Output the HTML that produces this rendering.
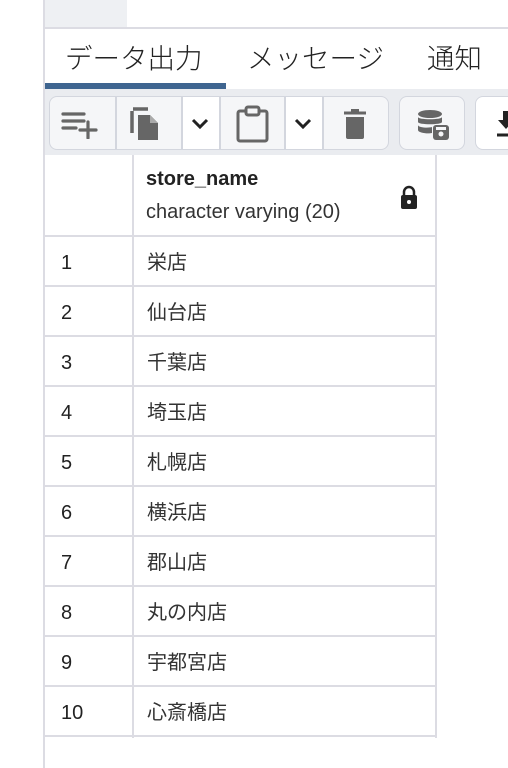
<!DOCTYPE html>
<html><head><meta charset="utf-8"><style>
*{margin:0;padding:0;box-sizing:border-box}
body{width:508px;height:768px;overflow:hidden;background:#fff;font-family:"Liberation Sans","Noto Sans CJK JP",sans-serif;position:relative;color:#222}
.abs{position:absolute}
.tab{position:absolute;top:36px;font-size:27.5px;line-height:40px;color:#222;font-family:"Noto Sans CJK JP",sans-serif;font-weight:300}
.grp{position:absolute;top:96px;height:54px;border:1.5px solid #d3d6de;border-radius:8px;background:#f5f6f8;overflow:hidden}
.sep{position:absolute;top:0;bottom:0;width:1.5px;background:#d3d6de}
.dd{position:absolute;top:0;bottom:0;background:#fff}
.row{position:absolute;left:45px;width:392px;height:50px;border-bottom:2px solid #dcdce3}
.num{position:absolute;left:16px;top:15px;font-size:20px;color:#222}
.nm{position:absolute;left:102px;top:9px;font-size:20px;color:#333;font-family:"Noto Sans CJK JP",sans-serif}
</style></head><body>
<div class="abs" style="left:43px;top:0;width:2px;height:768px;background:#dcdce3"></div>
<div class="abs" style="left:45px;top:0;width:82px;height:27px;background:#eef0f3"></div>
<div class="abs" style="left:45px;top:27px;width:463px;height:2px;background:#dcdce3"></div>
<div class="tab" style="left:65px">データ出力</div>
<div class="tab" style="left:247px">メッセージ</div>
<div class="tab" style="left:427px">通知</div>
<div class="abs" style="left:45px;top:83px;width:181px;height:6px;background:#3f6590"></div>
<div class="abs" style="left:45px;top:89px;width:463px;height:66px;background:#eaecf0"></div>
<div class="grp" style="left:49px;width:340px">
 <div class="sep" style="left:65px"></div>
 <div class="dd" style="left:131px;width:38px"></div>
 <div class="sep" style="left:131px"></div>
 <div class="sep" style="left:169px"></div>
 <div class="dd" style="left:234px;width:38px"></div>
 <div class="sep" style="left:234px"></div>
 <div class="sep" style="left:272px"></div>
 <svg class="abs" style="left:10px;top:12px" width="44" height="30" viewBox="0 0 44 30"><g stroke="#666" stroke-width="3.2" stroke-linecap="round"><path d="M3 5H24M3 12H24M3 19H16M28 13V29M20 21H36"/></g></svg>
 <svg class="abs" style="left:78px;top:8px" width="40" height="40" viewBox="0 0 40 40"><path d="M4 6v22" stroke="#666" stroke-width="3.5" fill="none"/><path d="M5 4h15" stroke="#666" stroke-width="3.5"/><path d="M10 10h12l8 8v17H10z" fill="#666"/><path d="M22 10v8h8" fill="#aaa"/></svg>
 <svg class="abs" style="left:140px;top:20px" width="20" height="14" viewBox="0 0 20 14"><path d="M3 3l7 7 7-7" stroke="#222" stroke-width="3" fill="none"/></svg>
 <svg class="abs" style="left:185px;top:8px" width="36" height="38" viewBox="0 0 36 38"><rect x="3" y="6" width="29" height="30" rx="2" fill="none" stroke="#666" stroke-width="3"/><rect x="11" y="2" width="13" height="8" rx="2" fill="#f5f6f8" stroke="#666" stroke-width="3"/></svg>
 <svg class="abs" style="left:243px;top:20px" width="20" height="14" viewBox="0 0 20 14"><path d="M3 3l7 7 7-7" stroke="#222" stroke-width="3" fill="none"/></svg>
 <svg class="abs" style="left:292px;top:12px" width="26" height="32" viewBox="0 0 26 32"><path d="M2 4h22" stroke="#666" stroke-width="3"/><path d="M9 1h8" stroke="#666" stroke-width="3"/><path d="M4 8h18v20a2 2 0 0 1-2 2H6a2 2 0 0 1-2-2z" fill="#666"/></svg>
</div>
<div class="grp" style="left:399px;width:66px">
 <svg class="abs" style="left:17px;top:12px" width="34" height="32" viewBox="0 0 34 32"><ellipse cx="13" cy="5" rx="12" ry="4" fill="#666"/><path d="M1 8c0 3 24 3 24 0v5c0 3-24 3-24 0zM1 16c0 3 12 3 14 2v6c-4 1-14 0-14-3z" fill="#666"/><rect x="16" y="16" width="16" height="15" rx="3" fill="#666"/><circle cx="24" cy="25" r="2.5" fill="#f5f6f8"/><rect x="19" y="18" width="10" height="3" fill="#f5f6f8"/></svg>
</div>
<div class="grp" style="left:475px;width:60px;background:#fff">
 <svg class="abs" style="left:20px;top:12px" width="20" height="30" viewBox="0 0 20 30"><path d="M7 2h6v9h5l-8 9-8-9h5z" fill="#222"/><path d="M1 26h18" stroke="#222" stroke-width="3"/></svg>
</div>
<div class="abs" style="left:45px;top:155px;width:392px;height:82px;border-bottom:2px solid #dcdce3"></div>
<div class="abs" style="left:132px;top:155px;width:2px;height:583px;background:#dcdce3"></div>
<div class="abs" style="left:435px;top:155px;width:2px;height:583px;background:#dcdce3"></div>
<div class="abs" style="left:146px;top:168px;font-size:20px;font-weight:bold;color:#222">store_name</div>
<div class="abs" style="left:146px;top:201px;font-size:20px;color:#333">character varying (20)</div>
<svg class="abs" style="left:399px;top:185px" width="20" height="26" viewBox="0 0 20 26"><path d="M5 11V7a5 5 0 0 1 10 0v4" stroke="#222" stroke-width="2.5" fill="none"/><rect x="2" y="10" width="16" height="14" rx="2" fill="#222"/><circle cx="10" cy="17" r="2" fill="#fff"/></svg>
<div class="row" style="top:237px"><div class="num">1</div><div class="nm">栄店</div></div>
<div class="row" style="top:287px"><div class="num">2</div><div class="nm">仙台店</div></div>
<div class="row" style="top:337px"><div class="num">3</div><div class="nm">千葉店</div></div>
<div class="row" style="top:387px"><div class="num">4</div><div class="nm">埼玉店</div></div>
<div class="row" style="top:437px"><div class="num">5</div><div class="nm">札幌店</div></div>
<div class="row" style="top:487px"><div class="num">6</div><div class="nm">横浜店</div></div>
<div class="row" style="top:537px"><div class="num">7</div><div class="nm">郡山店</div></div>
<div class="row" style="top:587px"><div class="num">8</div><div class="nm">丸の内店</div></div>
<div class="row" style="top:637px"><div class="num">9</div><div class="nm">宇都宮店</div></div>
<div class="row" style="top:687px"><div class="num">10</div><div class="nm">心斎橋店</div></div>
</body></html>
